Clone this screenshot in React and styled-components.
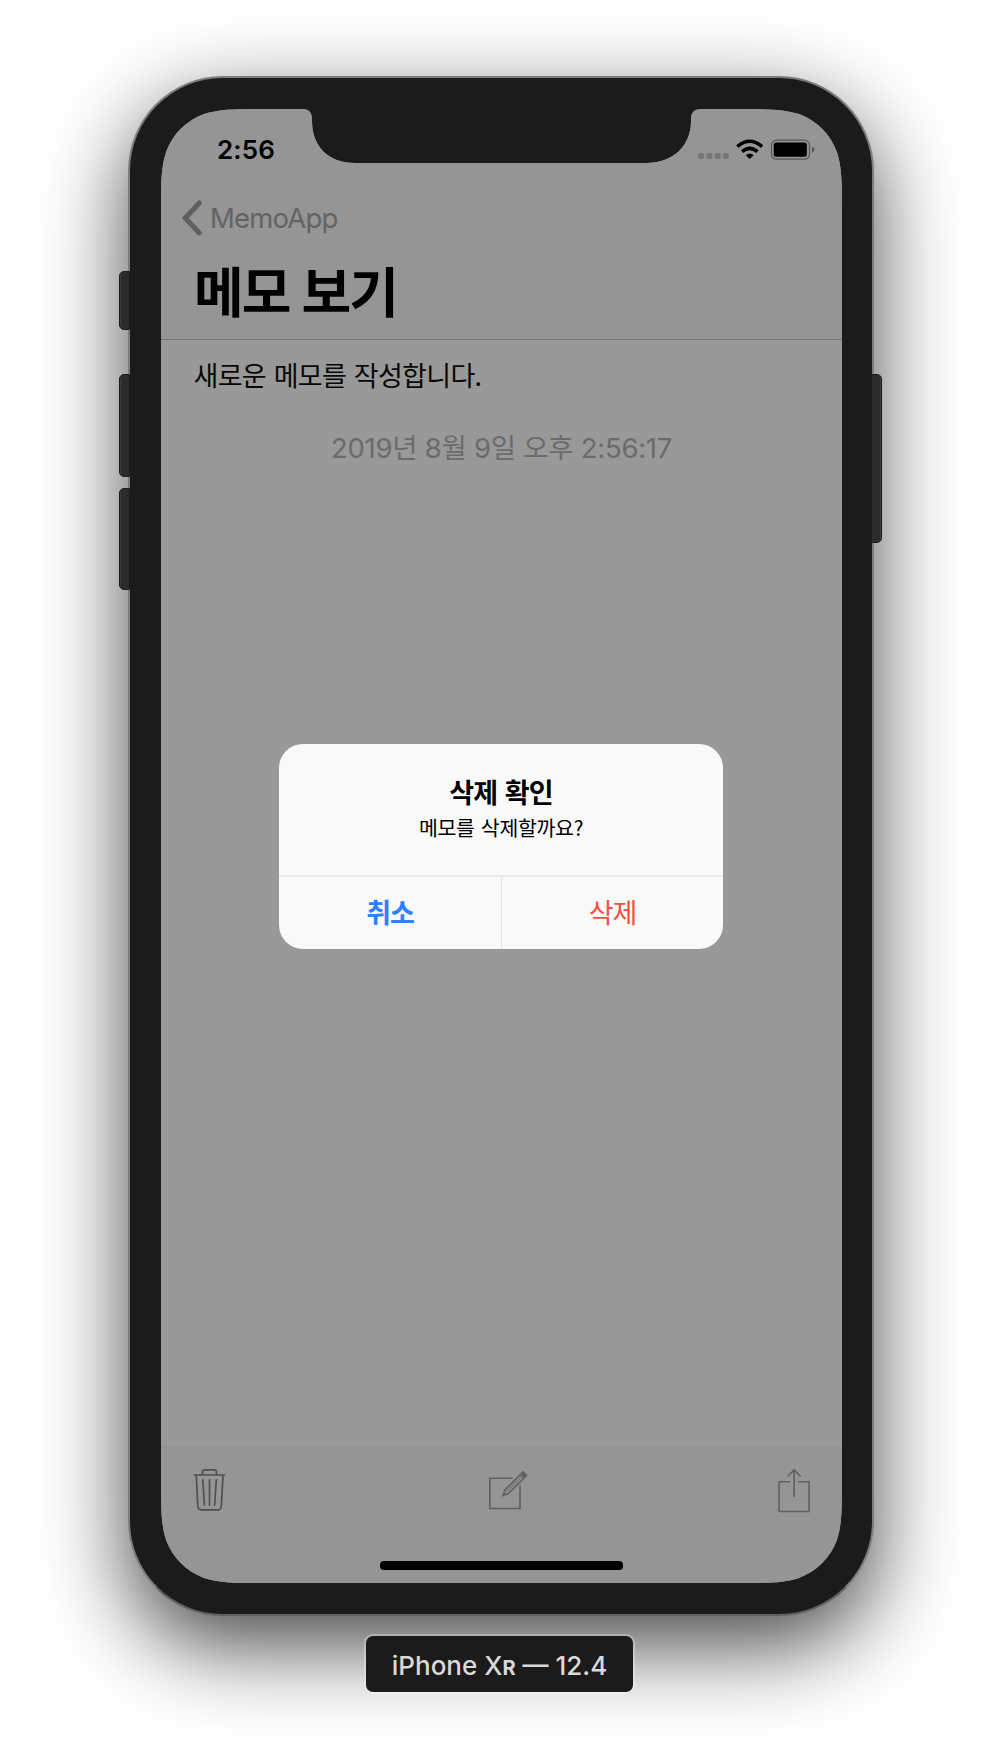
import React from "react";
import styled, { createGlobalStyle } from "styled-components";

const latin = `Inter, "Noto Sans CJK KR", sans-serif`;

const Global = createGlobalStyle`
  * { box-sizing: border-box; }
  body { margin: 0; background: #fff; overflow: hidden; font-family: ${latin}; }
`;

/* Continuous-curvature corner profile, as fractions of the radius. */
const r = 68;
const [a, b, c, d, e, f, g] = [1.528665, 1.088493, 0.868407, 0.631494, 0.074911, 0.372824, 0.16906].map((n) => n * r);
const W = 681;
const H = 1474;
const screenPath = [
  `M${a} 0 L141 0 C149 0 151 4 151 12 C151 37 167 54 194 54`,
  `L485 54 C512 54 530 37 530 12 C530 4 532 0 541 0`,
  `L${W - a} 0 C${W - b} 0 ${W - c} 0 ${W - d} ${e} C${W - f} ${g} ${W - g} ${f} ${W - e} ${d} C${W} ${c} ${W} ${b} ${W} ${a}`,
  `L${W} ${H - a} C${W} ${H - b} ${W} ${H - c} ${W - e} ${H - d} C${W - g} ${H - f} ${W - f} ${H - g} ${W - d} ${H - e} C${W - c} ${H} ${W - b} ${H} ${W - a} ${H}`,
  `L${a} ${H} C${b} ${H} ${c} ${H} ${d} ${H - e} C${f} ${H - g} ${g} ${H - f} ${e} ${H - d} C0 ${H - c} 0 ${H - b} 0 ${H - a}`,
  `L0 ${a} C0 ${b} 0 ${c} ${e} ${d} C${g} ${f} ${f} ${g} ${d} ${e} C${c} 0 ${b} 0 ${a} 0 Z`,
].join(" ");

const Desktop = styled.main`
  width: 1002px;
  height: 1764px;
  padding: 76px 0 0 119px;
  overflow: hidden;
  background: #fff;
`;

const Device = styled.div`
  display: flex;
  width: 764px;
`;

const Side = styled.div`
  display: flex;
  flex-direction: column;
  width: 11px;
  flex: none;
  margin-left: ${(p) => (p.$right ? "-1px" : "0")};
  padding-top: ${(p) => p.$top}px;
  z-index: 1;
`;

const HardwareKey = styled.div`
  height: ${(p) => p.$h}px;
  margin-bottom: ${(p) => p.$gap || 0}px;
  background: #2b2b2b;
  border: 1px solid #1c1c1c;
  box-shadow: inset ${(p) => (p.$right ? "-1px" : "1px")} 0 0 #3c3c3c;
  border-radius: ${(p) => (p.$right ? "1px 5px 5px 1px" : "5px 1px 1px 5px")};
`;

const Body = styled.div`
  width: 746px;
  height: 1540px;
  margin: 0 -2px;
  flex: none;
  padding: 31px 30px 29px 31px;
  background: #1b1b1b;
  border: 2px solid #7c7c7c;
  border-bottom-color: #606060;
  border-radius: 95px;
  box-shadow: 0 30px 86px rgba(0, 0, 0, 0.72);
`;

const Screen = styled.div`
  position: relative;
  display: flex;
  flex-direction: column;
  width: ${W}px;
  height: ${H}px;
  background: #999;
  clip-path: path("${screenPath}");
`;

const Header = styled.header`
  height: 231px;
  flex: none;
  background: #959595;
  border-bottom: 1px solid #757575;
`;

const StatusBar = styled.div`
  display: flex;
  justify-content: space-between;
  height: 73px;
  padding: 24px 27.5px 0 56px;
`;

const Clock = styled.span`
  font-size: 26px;
  line-height: 34px;
  font-weight: 600;
  letter-spacing: 0.1px;
  color: #000;
`;

const BackLink = styled.div`
  display: flex;
  align-items: center;
  gap: 7px;
  height: 71px;
  padding-left: 20px;
  font-size: 27.5px;
  letter-spacing: -0.8px;
  color: #636363;
`;

const Title = styled.h1`
  margin: 0;
  padding-left: 33px;
  font: 700 54px/74px "Noto Sans CJK KR", sans-serif;
  letter-spacing: -2px;
  word-spacing: 2px;
  color: #000;
`;

const Memo = styled.section`
  flex: 1;
  padding-top: 15px;
`;

const MemoText = styled.p`
  margin: 0;
  padding-left: 32.5px;
  font: 400 27px/40px "Noto Sans CJK KR", sans-serif;
  letter-spacing: -0.7px;
  word-spacing: 2.4px;
  color: #080808;
`;

const MemoDate = styled.p`
  margin: 33px 0 0;
  text-align: center;
  font-size: 27.5px;
  line-height: 40px;
  letter-spacing: -0.27px;
  color: #6b6b6b;
`;

const Toolbar = styled.footer`
  display: flex;
  flex-direction: column;
  height: 137px;
  flex: none;
  background: #959595;
`;

const Actions = styled.div`
  display: flex;
  justify-content: space-between;
  height: 115px;
  padding: 20px 31.5px 0 31px;
`;

const HomeIndicator = styled.div`
  width: 243px;
  height: 8.5px;
  margin: 0 auto;
  flex: none;
  border-radius: 4px;
  background: #000;
`;

const Backdrop = styled.div`
  position: absolute;
  inset: 0;
  display: flex;
  align-items: center;
  justify-content: center;
`;

const Alert = styled.div`
  width: 444px;
  height: 205px;
  margin: 1px 1px 0 0;
  display: flex;
  flex-direction: column;
  overflow: hidden;
  border-radius: 24px;
  background: #f9f9f9;
`;

const AlertBody = styled.div`
  height: 131px;
  padding-top: 28px;
  text-align: center;
  color: #000;
  font-family: "Noto Sans CJK KR", sans-serif;
`;

const AlertTitle = styled.div`
  font-size: 27px;
  font-weight: 600;
  line-height: 40px;
  letter-spacing: -0.9px;
  word-spacing: 2.5px;
`;

const AlertMessage = styled.div`
  font-size: 20.5px;
  line-height: 31px;
  letter-spacing: -0.3px;
  word-spacing: 2px;
`;

const AlertActions = styled.div`
  flex: 1;
  display: grid;
  grid-template-columns: 1fr 1fr;
  border-top: 2px solid #ebebeb;
`;

const AlertButton = styled.button`
  border: 0;
  border-left: ${(p) => (p.$divided ? "1px solid #e6e6e6" : "0")};
  padding: 0 0 3px;
  background: none;
  font: ${(p) => (p.$bold ? 700 : 400)} 27px/40px "Noto Sans CJK KR", sans-serif;
  letter-spacing: -1px;
  color: ${(p) => p.$color};
`;

const DeviceLabel = styled.div`
  width: 267px;
  height: 56px;
  margin: 20px 0 0 247px;
  padding-top: 2px;
  display: flex;
  align-items: center;
  justify-content: center;
  position: relative;
  border-radius: 7px;
  background: #1b1b1b;
  box-shadow: 0 0 0 2px rgba(255, 255, 255, 0.3);
  font-size: 26px;
  font-weight: 450;
  letter-spacing: 0;
  white-space: pre;
  color: #d9d9d9;
`;

const SmallCap = styled.span`
  font-size: 20px;
  font-weight: 650;
  padding-top: 5px;
`;

const StatusIcons = () => (
  <svg width="118" height="30" viewBox="0 0 118 30">
    <g fill="#777">
      {[1.2, 9.4, 17.6, 25.8].map((x) => (
        <rect key={x} x={x} y="20" width="6" height="6" rx="2" />
      ))}
    </g>
    <g fill="none" stroke="#000" strokeWidth="3.6">
      <path d="M40.3 13.7Q52.7 2.8 65.1 13.7" />
      <path d="M45 18.6Q52.7 12 60.4 18.6" />
    </g>
    <path d="M48.7 22.3Q52.7 18.9 56.7 22.3L52.7 26Z" fill="#000" />
    <rect x="74.5" y="7.2" width="38" height="19" rx="5" fill="none" stroke="#595959" strokeWidth="1.3" />
    <rect x="76.7" y="9.5" width="33.2" height="14.3" rx="2.5" fill="#000" />
    <path d="M115 13.5Q117.5 14.8 117.5 16.5T115 19.7Z" fill="#555" />
  </svg>
);

const ChevronIcon = () => (
  <svg width="22" height="38" viewBox="0 0 22 38" fill="none" stroke="#5f5f5f" strokeWidth="5" strokeLinecap="round">
    <path d="M18.3 4L4.3 19L18.3 34" />
  </svg>
);

const TrashIcon = () => (
  <svg width="36" height="48" viewBox="0 0 36 48" fill="none" stroke="#505050" strokeWidth="1.7" strokeLinecap="round" strokeLinejoin="round">
    <path d="M2.5 9H32.5M10.5 9V6Q10.5 3.8 13 3.8H22Q24.5 3.8 24.5 6V9M4.3 9.5L5.8 40.5Q6 43.8 9 43.8H26.5Q29 43.8 29.3 40.5L31 9.5M10.8 13.8L12.4 39.2M17.5 13.8V39.2M24.3 13.8L22.6 39.2" />
  </svg>
);

const ComposeIcon = () => (
  <svg width="29" height="48" viewBox="0 0 29 48" overflow="visible" fill="none" stroke="#606060" strokeWidth="1.6">
    <path d="M24.5 12.2H1.8V42.5H32V19.5" />
    <path d="M15 29.5L17 24L32.5 8.5L36 12L20.5 27.5Z" />
    <path d="M18.5 25.8L34 10.3" strokeWidth="1" />
    <path d="M33.6 7.4L35.2 5.9L38.5 9.3L37 10.9Z" fill="#606060" strokeLinejoin="round" />
    <path d="M14.6 30L16 26L18.5 28.5Z" fill="#606060" stroke="none" />
  </svg>
);

const ShareIcon = () => (
  <svg width="34" height="48" viewBox="0 0 34 48" fill="none" stroke="#606060" strokeWidth="1.6">
    <path d="M13 15.7H2.1V45.5H32.1V15.7H21.2M17.1 4.2V31M10.6 10.5L17.1 4L23.6 10.5" />
  </svg>
);

export default function App() {
  return (
    <Desktop>
      <Global />
      <Device>
        <Side $top={195}>
          <HardwareKey $h={59} $gap={44} />
          <HardwareKey $h={103} $gap={11} />
          <HardwareKey $h={102} />
        </Side>
        <Body>
          <Screen>
            <Header>
              <StatusBar>
                <Clock>2:56</Clock>
                <StatusIcons />
              </StatusBar>
              <BackLink>
                <ChevronIcon />
                MemoApp
              </BackLink>
              <Title>메모 보기</Title>
            </Header>
            <Memo>
              <MemoText>새로운 메모를 작성합니다.</MemoText>
              <MemoDate>2019년 8월 9일 오후 2:56:17</MemoDate>
            </Memo>
            <Toolbar>
              <Actions>
                <TrashIcon />
                <ComposeIcon />
                <ShareIcon />
              </Actions>
              <HomeIndicator />
            </Toolbar>
            <Backdrop>
              <Alert role="alertdialog">
                <AlertBody>
                  <AlertTitle>삭제 확인</AlertTitle>
                  <AlertMessage>메모를 삭제할까요?</AlertMessage>
                </AlertBody>
                <AlertActions>
                  <AlertButton $color="#2f80ff" $bold>취소</AlertButton>
                  <AlertButton $color="#f5503f" $divided>삭제</AlertButton>
                </AlertActions>
              </Alert>
            </Backdrop>
          </Screen>
        </Body>
        <Side $top={298} $right>
          <HardwareKey $h={169} $right />
        </Side>
      </Device>
      <DeviceLabel>
        iPhone X<SmallCap>R</SmallCap> — 12.4
      </DeviceLabel>
    </Desktop>
  );
}
